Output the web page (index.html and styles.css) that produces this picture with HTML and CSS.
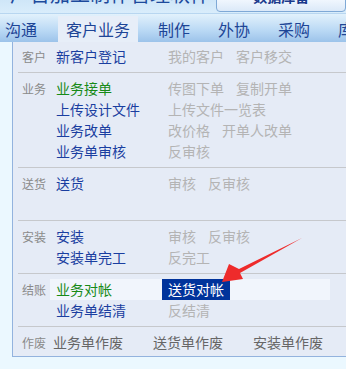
FILE: index.html
```html
<!DOCTYPE html>
<html lang="zh-CN">

<head>
    <meta charset="UTF-8">
    <title>客户业务</title>
    <link rel="stylesheet" href="styles.css">
</head>

<body>
    <div class="top">
        <div class="title">广告加工制作管理软件</div>
        <div class="topbtn"><span>数据库备</span></div>
    </div>

    <div class="nav">
        <span class="tab">沟通</span>
        <span class="tab active">客户业务</span>
        <span class="tab">制作</span>
        <span class="tab">外协</span>
        <span class="tab">采购</span>
        <span class="tab">库存</span>
    </div>

    <div class="page">
        <div class="panel">
            <div class="group">
                <div class="label">客户</div>
                <div class="rows">
                    <div class="row"><a class="main">新客户登记</a><a class="off">我的客户</a><a class="off">客户移交</a></div>
                </div>
            </div>
            <div class="group">
                <div class="label">业务</div>
                <div class="rows">
                    <div class="row"><a class="main green">业务接单</a><a class="off">传图下单</a><a class="off">复制开单</a></div>
                    <div class="row"><a class="main">上传设计文件</a><a class="off">上传文件一览表</a></div>
                    <div class="row"><a class="main">业务改单</a><a class="off">改价格</a><a class="off">开单人改单</a></div>
                    <div class="row"><a class="main">业务单审核</a><a class="off">反审核</a></div>
                </div>
            </div>
            <div class="group">
                <div class="label">送货</div>
                <div class="rows">
                    <div class="row"><a class="main">送货</a><a class="off">审核</a><a class="off">反审核</a></div>
                    <div class="row"></div>
                </div>
            </div>
            <div class="group">
                <div class="label">安装</div>
                <div class="rows">
                    <div class="row"><a class="main">安装</a><a class="off">审核</a><a class="off">反审核</a></div>
                    <div class="row"><a class="main">安装单完工</a><a class="off">反完工</a></div>
                </div>
            </div>
            <div class="group">
                <div class="label">结账</div>
                <div class="rows">
                    <div class="row hover"><a class="main green">业务对帐</a><a class="picked">送货对帐</a></div>
                    <div class="row"><a class="main">业务单结清</a><a class="off">反结清</a></div>
                </div>
            </div>
            <div class="group last">
                <div class="label">作废</div>
                <div class="rows">
                    <div class="row"><a class="void">业务单作废</a><a class="void">送货单作废</a><a class="void">安装单作废</a></div>
                </div>
            </div>
        </div>
    </div>

    <!-- red pointer drawn over the menu -->
    <svg class="arrow" width="346" height="369" viewBox="0 0 346 369">
        <polygon points="302,238 239,269 229,264 222,282 243,279 240,273" fill="#ee2b2b" />
    </svg>
</body>

</html>
```

FILE: styles.css
```css
body {
    margin: 0;
    width: 346px;
    height: 369px;
    overflow: hidden;
    font-family: "Noto Sans CJK SC", "Liberation Sans", sans-serif;
    background: #ebf8ff;
    position: relative;
}

.top {
    height: 13px;
    overflow: hidden;
    display: flex;
    background: linear-gradient(to bottom, #cfe6f8, #d9edfb);
    border-bottom: 1px solid #b8d6f0;
}

.title {
    margin: -20px 0 0 10px;
    font-size: 20px;
    line-height: 28px;
    color: #1c4a9c;
    width: 200px;
    height: 30px;
    overflow: hidden;
    white-space: nowrap;
}

.topbtn {
    margin: -3px 0 0 7px;
    width: 128px;
    height: 13px;
    border: 1px solid #7fa9d6;
    border-radius: 0 0 4px 4px;
    background: linear-gradient(to bottom, #f4f9ff, #dbe9f8);
    overflow: hidden;
    text-align: center;
}

.topbtn span {
    display: block;
    margin-top: -11px;
    font-size: 14px;
    line-height: 18px;
    font-weight: bold;
    color: #1a3a8c;
}

.nav {
    height: 28px;
    display: flex;
    align-items: flex-end;
    background: linear-gradient(to bottom, #e2f1fc, #b9d8f4 60%, #9cc3ea);
    white-space: nowrap;
}

.tab {
    height: 26px;
    line-height: 26px;
    font-size: 16px;
    color: #1d4596;
    padding: 0 14px;
}

.tab:first-child {
    padding: 0 21px 0 5px;
}

.tab.active {
    background: #e7eef8;
    padding: 0 8px;
}

.tab.active + .tab {
    padding-left: 20px;
}

.page {
    padding-left: 12px;
}

.panel {
    width: 340px;
    height: 314px;
    background: #e5ebf6;
    border-left: 1px solid #93b3de;
    border-bottom: 1px solid #93b3de;
}

.group {
    display: flex;
    margin-left: 5px;
    padding: 5px 0 5px;
    border-bottom: 1px solid #c6c8cc;
}

.group:first-child {
    padding-top: 4px;
}

.group.last {
    border-bottom: none;
}

.label {
    width: 34px;
    padding-left: 4px;
    font-size: 12px;
    line-height: 21px;
    color: #8a8a8a;
}

.rows {
    flex: 1;
}

.row {
    height: 21px;
    line-height: 21px;
    display: flex;
    font-size: 14px;
    white-space: nowrap;
}

.row a {
    cursor: pointer;
}

.main {
    width: 112px;
    color: #1a3ea0;
}

.green {
    color: #178a17;
}

.off {
    color: #b4b4b4;
    margin-right: 12px;
}

.row.hover {
    margin-left: -6px;
    padding-left: 6px;
    width: 274px;
    background: #f1f5fc;
}

.picked {
    margin-left: -6px;
    padding: 0 6px;
    background: #00339b;
    color: #fff;
}

.void {
    width: 100px;
    color: #666;
}

.arrow {
    position: absolute;
    left: 0;
    top: 0;
    pointer-events: none;
}
```
